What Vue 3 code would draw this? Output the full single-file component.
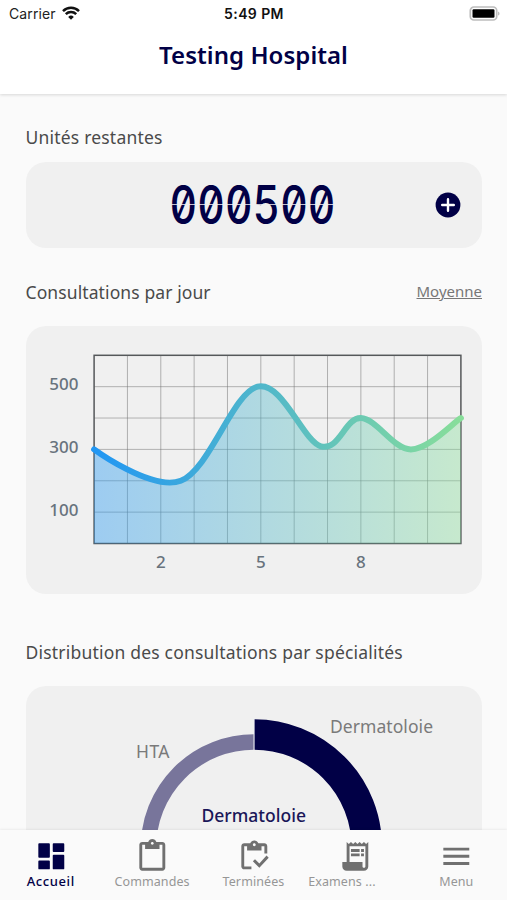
<template>
  <div class="screen">
    <header class="header">
      <div class="status">
        <div class="carrier">
          <span>Carrier</span>
          <svg width="18" height="14" viewBox="0 0 18 14" fill="none" stroke="#111" stroke-width="2.5">
            <path d="M1 5.1a11.5 11.5 0 0 1 16 0" />
            <path d="M3.8 8.2a7.4 7.4 0 0 1 10.4 0" />
            <path d="M9 13.7 6.2 10.9a4 4 0 0 1 5.6 0z" fill="#111" stroke="none" />
          </svg>
        </div>
        <span class="time">5:49 PM</span>
        <svg class="battery" width="31" height="15" viewBox="0 0 31 15">
          <rect x="1.3" y="1" width="26.4" height="13" rx="3.6" fill="#fff" stroke="#bdbdbd" stroke-width="1.7" />
          <rect x="3.5" y="3.2" width="22" height="8.6" rx="1.2" fill="#000" />
          <path d="M29.2 5.4c1.7.6 1.7 3.6 0 4.2z" fill="#b0b0b0" />
        </svg>
      </div>
      <h1 class="title">Testing Hospital</h1>
    </header>

    <main class="content">
      <section>
        <h2 class="heading units-heading">Unités restantes</h2>
        <div class="card units">
          <div class="counter"><span>{{ units }}</span></div>
          <svg class="add" width="26" height="26" viewBox="0 0 26 26">
            <circle cx="13" cy="13" r="12.4" fill="#010046" />
            <path d="M13 7.2v11.6M7.2 13h11.6" stroke="#fff" stroke-width="2.4" stroke-linecap="round" />
          </svg>
        </div>
      </section>

      <section class="daily">
        <div class="row">
          <h2 class="heading daily-heading">Consultations par jour</h2>
          <a class="link">Moyenne</a>
        </div>
        <div class="card line-card">
          <svg width="457" height="268" viewBox="25.5 326 457 268">
            <defs>
              <linearGradient id="line" gradientUnits="userSpaceOnUse" :x1="left" y1="0" :x2="right" y2="0">
                <stop offset="0" stop-color="#2196f3" />
                <stop offset="1" stop-color="#88de9a" />
              </linearGradient>
            </defs>
            <path :d="hLines" class="grid-h" />
            <path :d="vLines" class="grid-v" />
            <rect :x="left" :y="top" :width="right - left" :height="bottom - top" class="frame" />
            <path :d="areaPath" fill="url(#line)" fill-opacity=".4" />
            <path :d="linePath" class="curve" stroke="url(#line)" />
            <text v-for="v in [500, 300, 100]" :key="v" x="78" :y="py(v / 100) + 3.5" class="tick" text-anchor="end">{{ v }}</text>
            <text v-for="d in [2, 5, 8]" :key="d" :x="px(d)" y="568" class="tick" text-anchor="middle">{{ d }}</text>
          </svg>
        </div>
      </section>

      <section class="specialties">
        <h2 class="heading specialties-heading">Distribution des consultations par spécialités</h2>
        <div class="card donut-card">
          <svg width="457" height="320" viewBox="25.5 686 457 320">
            <path d="M253.5 742A105.5 105.5 0 0 0 253.5 953" fill="none" stroke="#78759b" stroke-width="15.5" />
            <path d="M253.7 734.4A112.7 112.7 0 0 1 253.7 959.8" fill="none" stroke="#010046" stroke-width="30.5" />
            <path d="M253.5 718.5v31.5" stroke="#eef0f5" stroke-width="1" />
            <text x="135.5" y="758" class="label" textLength="33.5">HTA</text>
            <text x="329.5" y="733" class="label" textLength="103">Dermatoloie</text>
            <text x="201" y="822" class="label center" textLength="104.5">Dermatoloie</text>
          </svg>
        </div>
      </section>
    </main>

    <nav class="tabs">
      <a v-for="tab in tabs" :key="tab.label" :class="['tab', tab.name, tab.active ? 'active' : '']">
        <svg width="34.6" height="34.6" viewBox="0 0 24 24" fill="currentColor">
          <path :d="tab.icon" fill-rule="evenodd" />
        </svg>
        <span>{{ tab.label }}</span>
      </a>
    </nav>
  </div>
</template>

<script setup>
const units = "000500";

const left = 93.6;
const right = 460.4;
const top = 355.3;
const bottom = 543.5;

const px = (x) => left + (x * (right - left)) / 11;
const py = (y) => bottom - (y * (bottom - top)) / 6;

const hLines = [1, 2, 3, 4, 5].map((y) => `M${left} ${py(y)}H${right}`).join("");
const vLines = Array.from({ length: 10 }, (_, i) => `M${px(i + 1)} ${top}V${bottom}`).join("");

const points = [
  [0, 3],
  [2.6, 2],
  [4.9, 5],
  [6.8, 3.1],
  [8, 4],
  [9.5, 3],
  [11, 4],
].map(([x, y]) => [px(x), py(y)]);

// each control point leans towards the neighbouring points
function smooth(list, smoothness = 0.35) {
  let d = `M${list[0].join(" ")}`;
  let lean = [0, 0];
  for (let i = 1; i < list.length; i++) {
    const prev = list[i - 1];
    const cur = list[i];
    const next = list[i + 1] || cur;
    const c1 = [prev[0] + lean[0], prev[1] + lean[1]];
    lean = [((next[0] - prev[0]) / 2) * smoothness, ((next[1] - prev[1]) / 2) * smoothness];
    const c2 = [cur[0] - lean[0], cur[1] - lean[1]];
    d += `C${c1.join(" ")} ${c2.join(" ")} ${cur.join(" ")}`;
  }
  return d;
}

const linePath = smooth(points);
const areaPath = `${linePath}V${bottom}H${left}Z`;

const tabs = [
  {
    name: "home",
    label: "Accueil",
    active: true,
    icon: "M3.6 3H10.4Q11 3 11 3.6V12.4Q11 13 10.4 13H3.6Q3 13 3 12.4V3.6Q3 3 3.6 3zM3.6 15H10.4Q11 15 11 15.6V20.4Q11 21 10.4 21H3.6Q3 21 3 20.4V15.6Q3 15 3.6 15zM13.6 11H20.4Q21 11 21 11.6V20.4Q21 21 20.4 21H13.6Q13 21 13 20.4V11.6Q13 11 13.6 11zM13.6 3H20.4Q21 3 21 3.6V8.4Q21 9 20.4 9H13.6Q13 9 13 8.4V3.6Q13 3 13.6 3z",
  },
  {
    name: "orders",
    label: "Commandes",
    icon: "M19 2h-4.18C14.4.84 13.3 0 12 0S9.6.84 9.18 2H5c-1.1 0-2 .9-2 2v16c0 1.1.9 2 2 2h14c1.1 0 2-.9 2-2V4c0-1.1-.9-2-2-2zm-7 0c.55 0 1 .45 1 1s-.45 1-1 1-1-.45-1-1 .45-1 1-1zm7 18H5V4h2v3h10V4h2v16z",
  },
  {
    name: "done",
    label: "Terminées",
    icon: "M5 5h2v3h10V5h2v5h2V5c0-1.1-.9-2-2-2h-4.18C14.4 1.84 13.3 1 12 1s-2.4.84-2.82 2H5c-1.1 0-2 .9-2 2v14c0 1.1.9 2 2 2h5v-2H5V5zm7-2c.55 0 1 .45 1 1s-.45 1-1 1-1-.45-1-1 .45-1 1-1zM20.5 11.5 15.51 17l-3.01-3L11 15.5l4.51 4.5L22 13z",
  },
  {
    name: "exams",
    label: "Examens ...",
    icon: "M19.5 3.5 18 2l-1.5 1.5L15 2l-1.5 1.5L12 2l-1.5 1.5L9 2 7.5 3.5 6 2v14H3v3c0 1.66 1.34 3 3 3h12c1.66 0 3-1.34 3-3V2l-1.5 1.5zM19 19c0 .55-.45 1-1 1s-1-.45-1-1v-3H8V5h11v14zM9 7h6v2H9zM16 7h2v2h-2zM9 10h6v2H9zM16 10h2v2h-2z",
  },
  {
    name: "menu",
    label: "Menu",
    icon: "M3 18h18v-2H3v2zm0-5h18v-2H3v2zm0-7v2h18V6H3z",
  },
];
</script>

<style>
body {
  margin: 0;
}
</style>

<style scoped>
.screen {
  display: flex;
  flex-direction: column;
  width: 507px;
  height: 900px;
  overflow: hidden;
  background: #fafafa;
  font-family: "Noto Sans", sans-serif;
  color: #4a4a4a;
}
.header {
  flex: none;
  height: 94px;
  background: #fff;
  box-shadow: 0 1px 3px rgba(0, 0, 0, 0.14);
  z-index: 1;
}
.status {
  display: grid;
  grid-template-columns: 1fr auto 1fr;
  align-items: center;
  height: 27px;
  padding: 0 7px 0 9px;
  font-family: Inter, sans-serif;
  font-size: 14px;
  color: #222;
}
.carrier {
  display: flex;
  align-items: center;
  gap: 6px;
  letter-spacing: 0.1px;
}
.carrier svg {
  margin-top: -1px;
}
.time {
  margin-right: 1px;
  font-weight: 600;
  letter-spacing: 0.4px;
  color: #111;
}
.battery {
  justify-self: end;
  margin-top: -1px;
}
.title {
  margin: 12px 0 0;
  font-size: 24px;
  line-height: 32px;
  font-weight: 600;
  letter-spacing: 0.05px;
  text-align: center;
  color: #010046;
}
.content {
  flex: 1;
  min-height: 0;
  overflow: hidden;
  padding: 30.5px 25px 0 25.5px;
}
.heading {
  margin: 0;
  font-size: 17.5px;
  line-height: 24px;
  font-weight: 400;
  white-space: nowrap;
}
.units-heading {
  letter-spacing: 0.2px;
}
.daily-heading {
  letter-spacing: 0.1px;
}
.specialties-heading {
  letter-spacing: 0.2px;
}
.card {
  border-radius: 20px;
  background: #f0f0f0;
  overflow: hidden;
}
.card svg {
  display: block;
}
.units {
  display: grid;
  grid-template-columns: 1fr auto 1fr;
  align-items: center;
  height: 86px;
  margin-top: 13px;
  padding: 0 21px;
}
.counter {
  position: relative;
  grid-column: 2;
  width: 165px;
  display: flex;
  justify-content: center;
  font-family: Inter, sans-serif;
  font-size: 53px;
  line-height: 60px;
  font-weight: 500;
  font-feature-settings: "zero", "tnum";
  color: #010046;
}
.counter span {
  transform: translateX(-1.5px) scaleX(0.805);
}
/* split between the upper and lower half of the digits */
.counter::after {
  content: "";
  position: absolute;
  left: 0;
  right: 0;
  top: 29px;
  height: 1px;
  background: #f0f0f0;
  opacity: 0.8;
}
.add {
  justify-self: end;
}
.daily {
  margin-top: 32.5px;
}
.row {
  display: flex;
  justify-content: space-between;
  align-items: center;
}
.link {
  margin-top: -2px;
  font-size: 15px;
  line-height: 22px;
  color: #777;
  text-decoration: underline;
}
.line-card {
  height: 268px;
  margin-top: 22px;
}
.grid-h {
  stroke: #707070;
  stroke-opacity: 0.55;
  stroke-width: 0.9;
}
.grid-v {
  stroke: #707070;
  stroke-opacity: 0.5;
  stroke-width: 1;
}
.frame {
  fill: none;
  stroke: #55585a;
  stroke-width: 1.5;
}
.curve {
  fill: none;
  stroke-width: 6;
  stroke-linecap: round;
}
.tick {
  font-size: 17px;
  font-weight: 500;
  fill: #68737d;
}
.specialties {
  margin-top: 46px;
}
.donut-card {
  height: 320px;
  margin-top: 22px;
}
.label {
  font-size: 17.5px;
  fill: #7a7a7a;
}
.center {
  font-weight: 500;
  fill: #1a1658;
}
.tabs {
  flex: none;
  display: flex;
  height: 61px;
  padding-top: 9px;
  background: #fafafa;
  box-shadow: 0 -1px 2px rgba(0, 0, 0, 0.06);
  z-index: 1;
}
.tab {
  flex: 1 1 0;
  min-width: 0;
  display: flex;
  flex-direction: column;
  align-items: center;
  color: #707070;
}
.tab svg {
  margin: -0.4px 0 0.4px 0.8px;
}
.tab span {
  font-size: 12.5px;
  line-height: 16px;
  letter-spacing: 0.1px;
  white-space: nowrap;
  color: #969696;
}
.tab.exams span {
  margin-right: 26px;
}
.tab.active,
.tab.active span {
  color: #010046;
}
.tab.active span {
  margin-top: -1px;
  font-weight: 500;
  font-size: 13px;
  letter-spacing: 0.6px;
}
</style>
